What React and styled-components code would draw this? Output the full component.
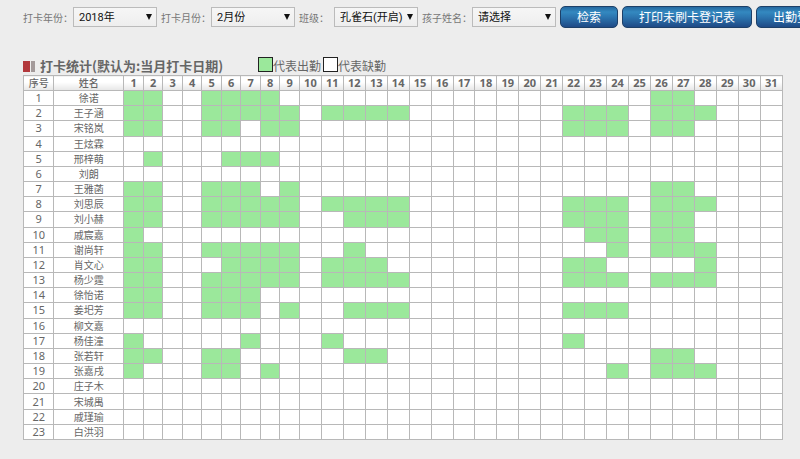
import React, { useState } from "react";
import styled, { createGlobalStyle } from "styled-components";

const GlobalStyle = createGlobalStyle`
  body {
    margin: 0;
    background: #ededed;
    color: #666;
    font-family: "Noto Sans", "Noto Sans CJK SC", sans-serif;
    font-size: 10px;
  }

  * {
    box-sizing: border-box;
  }
`;

const days = Array.from({ length: 31 }, (_, i) => i + 1);

// Each student with the days they clocked in
const students = [
  { name: "徐诺", present: [1, 2, 5, 6, 7, 8, 26, 27] },
  { name: "王子涵", present: [1, 2, 5, 6, 7, 8, 9, 11, 12, 13, 14, 22, 23, 24, 26, 27, 28] },
  { name: "宋铭岚", present: [1, 2, 5, 6, 8, 9, 22, 23, 24, 26, 27] },
  { name: "王炫霖", present: [] },
  { name: "邢梓萌", present: [2, 6, 7, 8] },
  { name: "刘朗", present: [] },
  { name: "王雅菡", present: [1, 2, 5, 6, 7, 9, 26, 27] },
  { name: "刘思辰", present: [1, 2, 5, 6, 7, 8, 9, 11, 12, 13, 14, 22, 23, 24, 26, 27, 28] },
  { name: "刘小赫", present: [1, 2, 5, 6, 7, 8, 9, 12, 13, 14, 22, 23, 24, 26, 27] },
  { name: "戚宸嘉", present: [1, 23, 24, 26, 27] },
  { name: "谢尚轩", present: [1, 2, 5, 6, 7, 8, 9, 12, 24, 26, 27, 28] },
  { name: "肖文心", present: [1, 2, 6, 7, 8, 9, 11, 12, 13, 22, 23, 28] },
  { name: "杨少霆", present: [1, 2, 5, 6, 7, 8, 9, 11, 12, 13, 14, 22, 23, 24, 26, 27, 28] },
  { name: "徐怡诺", present: [1, 2, 5, 6, 7] },
  { name: "姜圯芳", present: [1, 2, 5, 6, 7, 9, 12, 13, 14, 22, 23, 24] },
  { name: "柳文嘉", present: [] },
  { name: "杨佳潼", present: [1, 7, 11, 22] },
  { name: "张若轩", present: [1, 2, 5, 6, 12, 13, 26, 27] },
  { name: "张嘉戌", present: [1, 5, 6, 8, 24, 26, 27, 28] },
  { name: "庄子木", present: [] },
  { name: "宋城禺", present: [] },
  { name: "戚瑾瑜", present: [] },
  { name: "白洪羽", present: [] },
];

const filters = [
  { id: "year", label: "打卡年份：", options: ["2018年", "2017年"] },
  { id: "month", label: "打卡月份：", options: ["2月份", "1月份"] },
  { id: "class", label: "班级：", options: ["孔雀石(开启)"], short: true },
  { id: "child", label: "孩子姓名：", options: ["请选择"] },
];

const Filter = ({ id, label, options, short }) => {
  const [value, setValue] = useState(options[0]);

  return (
    <Field>
      <FieldLabel htmlFor={id} $short={short}>
        {label}
      </FieldLabel>
      <SelectBox>
        <Select id={id} value={value} onChange={(e) => setValue(e.target.value)}>
          {options.map((option) => (
            <option key={option}>{option}</option>
          ))}
        </Select>
        <Arrow viewBox="0 0 6 6" aria-hidden="true">
          <path d="M0 0h6L3 6z" fill="#111" />
        </Arrow>
      </SelectBox>
    </Field>
  );
};

const App = () => (
  <Page>
    <GlobalStyle />
    <Toolbar>
      {filters.map((filter) => (
        <Filter key={filter.id} {...filter} />
      ))}
      <Actions>
        <Button type="button">检索</Button>
        <Button type="button">打印未刷卡登记表</Button>
        <Button type="button">出勤登记表</Button>
      </Actions>
    </Toolbar>

    <Heading>
      <Marker viewBox="0 0 12 11" aria-hidden="true">
        <rect width="7" height="11" fill="#b2383c" />
        <rect x="8" width="4" height="11" fill="#a39a9a" />
      </Marker>
      <Title>打卡统计(默认为:当月打卡日期)</Title>
      <Legend>
        <Swatch $present />
        代表出勤
        <Swatch />
        代表缺勤
      </Legend>
    </Heading>

    <Table>
      <colgroup>
        <Col $width="4%" />
        <Col $width="9.2%" />
        {days.map((day) => (
          <Col key={day} $width={day < 10 ? "2.57%" : "2.89%"} />
        ))}
      </colgroup>
      <thead>
        <tr>
          <HeadCell>序号</HeadCell>
          <HeadCell>姓名</HeadCell>
          {days.map((day) => (
            <HeadCell key={day} $day>
              {day}
            </HeadCell>
          ))}
        </tr>
      </thead>
      <tbody>
        {students.map((student, index) => (
          <tr key={student.name}>
            <NumberCell>{index + 1}</NumberCell>
            <Cell>{student.name}</Cell>
            {days.map((day) => (
              <Cell key={day} $present={student.present.includes(day)} />
            ))}
          </tr>
        ))}
      </tbody>
    </Table>
  </Page>
);

export default App;

const Page = styled.main`
  padding: 6px 17px 0 23px;
`;

// Runs to the window's right edge and clips there
const Toolbar = styled.form`
  display: flex;
  align-items: center;
  gap: 4px;
  height: 22px;
  margin-right: -17px;
  overflow: hidden;
  white-space: nowrap;
`;

const Field = styled.div`
  display: flex;
  align-items: center;
  flex: none;
`;

const FieldLabel = styled.label`
  width: ${(props) => (props.$short ? "35px" : "50px")};
  color: #777;
`;

const SelectBox = styled.div`
  position: relative;
  width: 84px;
`;

const Select = styled.select`
  display: block;
  width: 100%;
  height: 20px;
  padding: 0 5px;
  appearance: none;
  border: 1px solid #bbb;
  border-radius: 0;
  background: linear-gradient(#f6f6f6, #eee);
  color: #111;
  font-family: Roboto, "Noto Sans CJK SC", sans-serif;
  font-size: 11px;
`;

const Arrow = styled.svg`
  position: absolute;
  top: 7px;
  right: 5px;
  width: 6px;
  height: 6px;
  pointer-events: none;
`;

const Actions = styled.div`
  display: flex;
  flex: none;
  gap: 4px;
`;

const Button = styled.button`
  height: 22px;
  padding: 0 16px;
  border: 1px solid #1d4068;
  border-radius: 5px;
  background: linear-gradient(#2468a0, #3489c0 25%, #2c76b0 50%, #1f4a86);
  color: #fff;
  font-family: "Noto Sans CJK SC", sans-serif;
  font-size: 12px;
  line-height: 20px;
`;

const Heading = styled.div`
  display: flex;
  align-items: center;
  height: 18px;
  margin-top: 29px;
`;

const Marker = styled.svg`
  width: 12px;
  height: 11px;
  margin-right: 5px;
`;

const Title = styled.h1`
  margin: 0 35px 0 0;
  font-family: "Noto Sans CJK SC", sans-serif;
  font-size: 13px;
  line-height: 18px;
`;

const Legend = styled.div`
  display: flex;
  align-items: flex-start;
  font-family: "Noto Sans CJK SC", sans-serif;
  font-size: 12px;
  line-height: 18px;
`;

const Swatch = styled.span`
  width: 15px;
  height: 15px;
  border: 1px solid #222;
  background: ${(props) => (props.$present ? "#9be89b" : "#fff")};

  &:not(:first-child) {
    margin-left: 2px;
  }
`;

// Rows share whatever height the window leaves under the heading
const Table = styled.table`
  width: 100%;
  height: calc(100vh - 94px);
  table-layout: fixed;
  border-collapse: collapse;
  background: #fff;
`;

const Col = styled.col`
  width: ${(props) => props.$width};
`;

const Cell = styled.td`
  padding: 0;
  border: 1px solid #b8b8b8;
  background: ${(props) => (props.$present ? "#9be89b" : "transparent")};
  line-height: 14px;
  text-align: center;
`;

const NumberCell = styled(Cell)`
  font-size: 11px;
`;

const HeadCell = styled.th`
  padding: 0;
  border: 1px solid #b8b8b8;
  background: linear-gradient(#fff 40%, #e6e6e6);
  font-size: ${(props) => (props.$day ? "11px" : "10px")};
  font-weight: ${(props) => (props.$day ? 700 : 500)};
  line-height: 14px;
`;
